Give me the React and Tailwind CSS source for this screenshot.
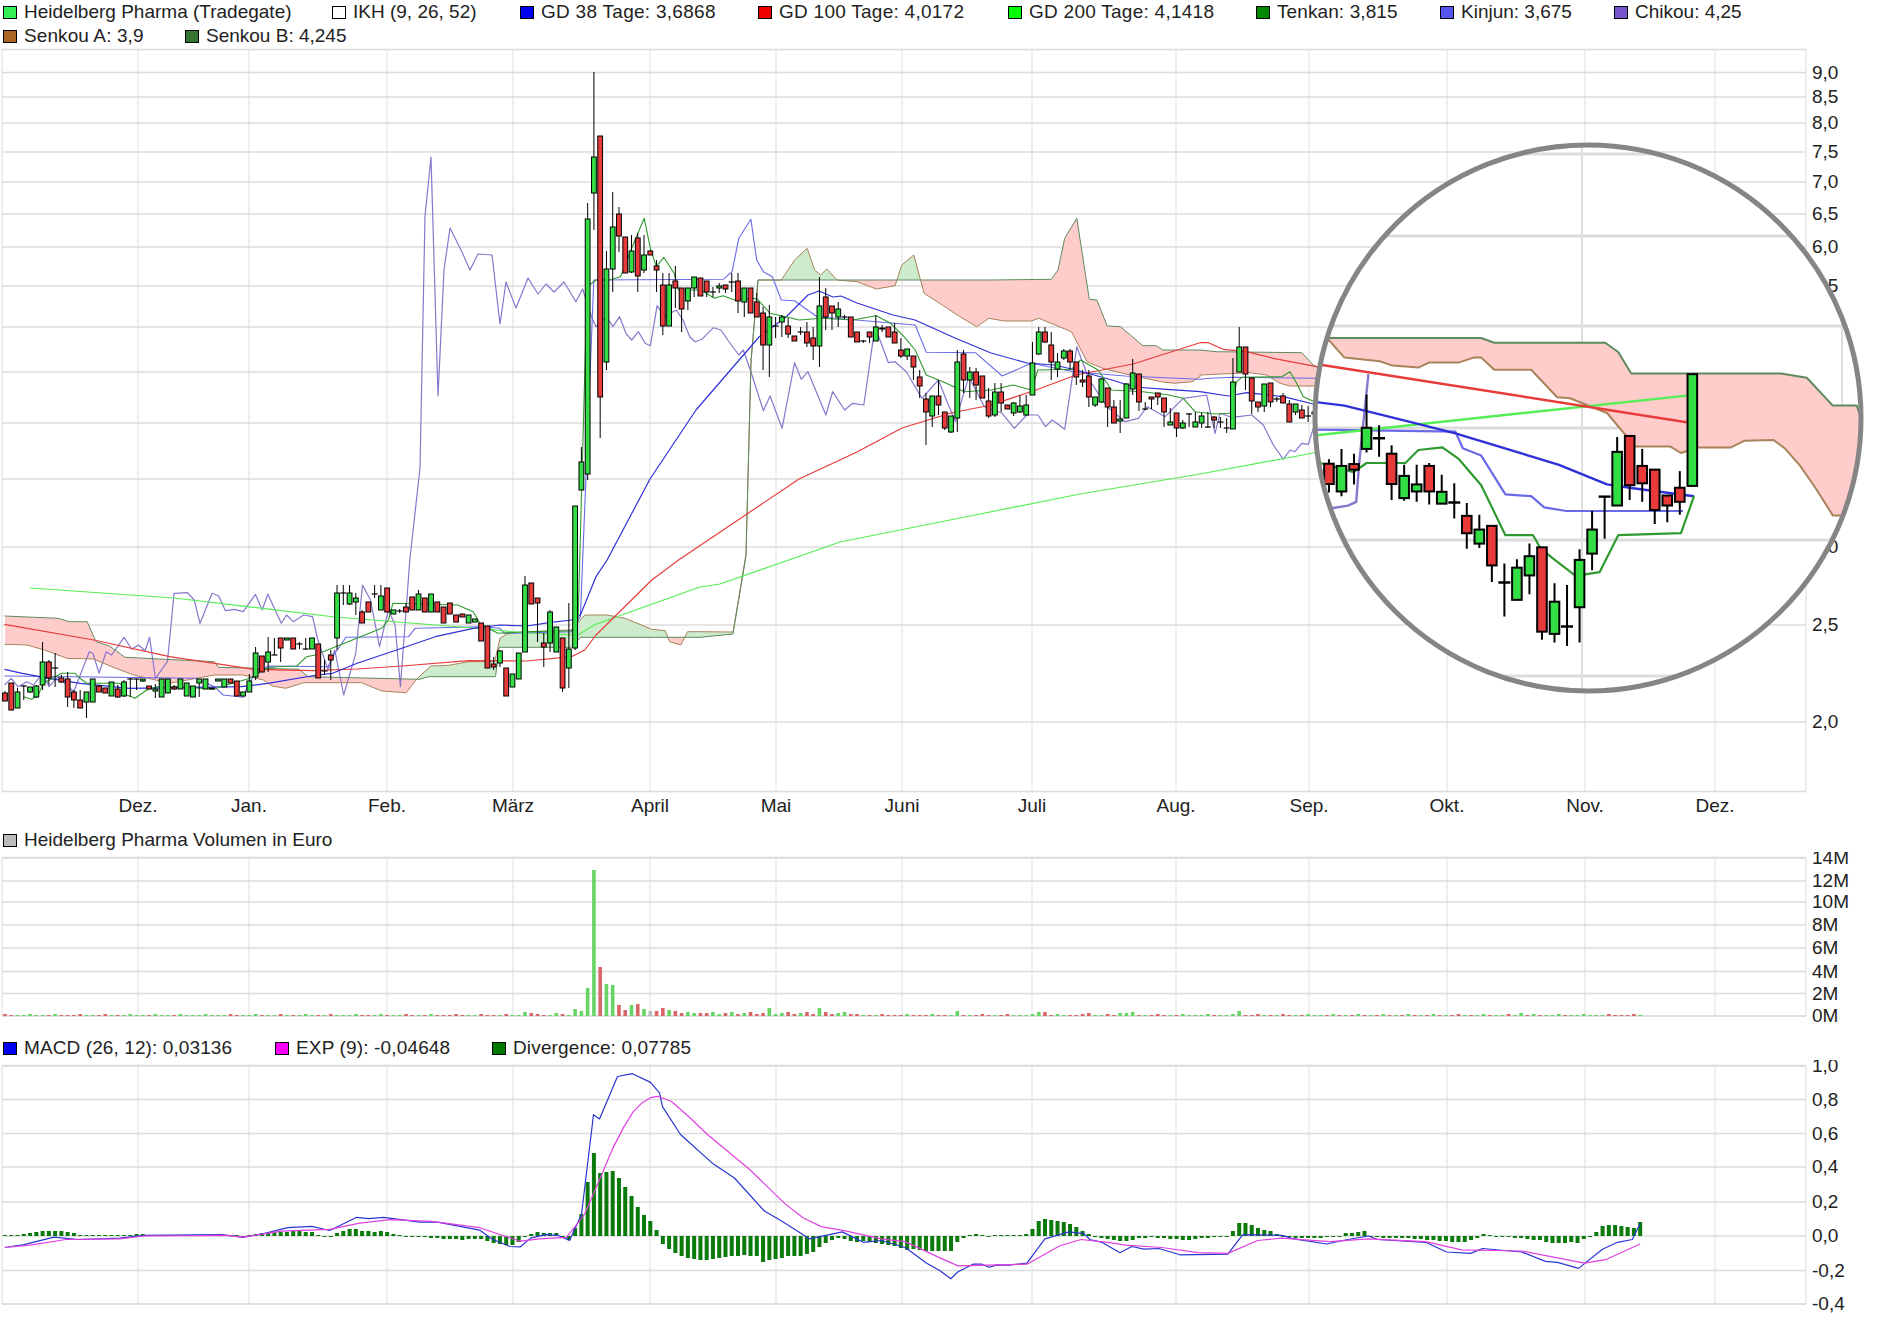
import React from "react";

// converters from measured crops to page pixels
const z3 = (l) => l.map(([x, y]) => [x / 2.24, 560 + y / 3]);
const z5 = (l) => l.map(([x, y]) => [500 + x / 2.24, 60 + y / 3]);
const z8 = (l) => l.map(([x, y]) => [1100 + x / 3, 300 + y / 3]);
const z12 = (l) => l.map(([x, y]) => [x / 3, 600 + y / 3]);
const lens = (l) => l.map(([x, y]) => [1444 + x / 5.406, 274 + y / 5.406]);
const z6 = (l) => l.map(([x, y]) => [x / 1.668, 780 + y / 2.877]);
const z7 = (l) => l.map(([x, y]) => [940 + x / 1.668, 780 + y / 2.877]);

const months = [
  ["Dez.", 138], ["Jan.", 249], ["Feb.", 387], ["März", 513], ["April", 650], ["Mai", 776], ["Juni", 902],
  ["Juli", 1032], ["Aug.", 1176], ["Sep.", 1309], ["Okt.", 1447], ["Nov.", 1585], ["Dez.", 1715],
];
const priceTicks = [
  ["9,0", 72.5], ["8,5", 97], ["8,0", 123], ["7,5", 152], ["7,0", 182], ["6,5", 214], ["6,0", 247],
  ["5,5", 286], ["5,0", 327], ["4,5", 372], ["4,0", 423], ["3,5", 479], ["3,0", 547], ["2,5", 625], ["2,0", 722],
];
const volumeTicks = [["14M", 858], ["12M", 881], ["10M", 902], ["8M", 925], ["6M", 948], ["4M", 971.5], ["2M", 993.5], ["0M", 1016]];
const macdTicks = [["1,0", 1066], ["0,8", 1099.5], ["0,6", 1133.5], ["0,4", 1167], ["0,2", 1202], ["0,0", 1236], ["-0,2", 1270.5], ["-0,4", 1304]];

// [green?, body top, body bottom, wick high, wick low], i = 0..209
const candles = [
  [0,693,701,691,701],[0,683,710,683,710],[1,692,708,688,708],[1,686,686,685,700],[1,687,692,687,693],[1,686,697,685,698],
  [1,662,685,642,690],[0,662,678,660,685],[1,668,668,653,687],[0,678,682,675,683],[0,679,697,672,707],[0,692,700,690,708],
  [0,700,708,690,708],[1,692,702,692,718],[1,679,702,679,702],[0,686,692,685,692],[0,688,693,688,693],[1,682,696,682,696],
  [0,689,697,685,698],[1,682,696,680,697],[1,679,679,678,697],[1,679,679,679,690],[1,679,681,679,682],[0,686,689,686,689],
  [1,689,691,684,698],[1,679,697,679,697],[1,679,693,679,693],[0,687,689,685,690],[1,679,689,679,689],[1,683,696,683,696],
  [1,686,697,686,697],[1,679,683,679,697],[1,679,689,679,689],[1,688,689,688,689],[1,679,681,679,681],[1,679,687,679,687],
  [0,679,683,679,683],[0,681,696,681,696],[1,692,696,692,696],[1,681,692,674,692],[1,653,677,647,680],[0,656,672,656,672],
  [1,652,662,637,672],[1,655,655,638,655],[0,638,648,638,662],[1,638,640,638,640],[0,638,649,638,649],[1,644,644,642,649],
  [1,649,649,638,650],[1,638,649,638,649],[0,644,678,644,678],[1,671,671,660,675],[0,655,660,650,680],[1,593,638,585,650],
  [1,593,593,585,605],[1,593,604,585,605],[1,598,602,593,615],[0,612,623,610,623],[0,602,612,602,612],[1,594,594,585,598],
  [1,596,610,585,610],[0,588,612,588,612],[1,610,614,610,614],[1,611,611,609,613],[0,607,612,603,612],[0,597,610,597,610],
  [1,594,610,590,610],[0,598,612,598,612],[1,594,612,594,612],[0,602,612,602,612],[0,607,623,607,623],[0,603,614,603,614],
  [0,615,622,615,622],[0,614,617,614,617],[1,615,623,615,623],[1,619,622,619,622],[0,623,641,623,641],[0,626,668,626,668],
  [0,664,667,657,670],[1,651,663,650,667],[0,668,696,668,696],[1,674,687,674,687],[1,653,679,653,679],[1,585,652,576,652],
  [0,583,604,583,604],[0,598,603,598,642],[0,643,647,633,667],[1,612,643,610,652],[1,627,652,627,652],[0,638,688,638,692],
  [1,649,668,603,688],[1,506,648,506,650],[1,462,490,447,490],[1,219,474,203,480],[1,157,193,72,230],[0,136,397,136,438],
  [1,269,362,251,370],[1,227,269,192,292],[0,214,236,207,252],[0,237,273,237,273],[1,251,272,235,273],[0,238,276,233,292],
  [1,255,270,235,273],[0,251,255,250,255],[0,266,270,260,292],[0,285,326,273,335],[1,285,326,273,326],[0,281,288,266,308],
  [0,288,309,288,332],[1,288,301,288,310],[1,277,288,277,297],[0,278,296,278,296],[0,281,292,281,297],[1,292,292,287,297],
  [1,286,288,283,293],[0,285,289,285,293],[1,282,282,273,292],[0,281,301,273,313],[1,288,302,288,317],[0,288,313,288,313],
  [0,302,317,293,317],[0,313,345,307,370],[1,317,345,305,377],[1,326,326,317,338],[1,317,322,315,337],[0,326,334,318,338],
  [0,336,341,336,341],[1,332,332,327,335],[0,332,343,322,347],[0,338,346,327,360],[1,306,346,277,367],[0,297,317,288,330],
  [0,306,313,306,330],[1,309,317,302,327],[1,317,317,315,319],[0,317,337,317,337],[0,332,342,332,342],[1,341,341,340,343],
  [0,332,337,332,343],[1,327,341,315,341],[0,328,329,325,332],[0,327,337,327,337],[0,332,343,323,343],[0,350,356,338,358],
  [1,349,356,349,360],[0,356,367,356,380],[0,377,386,370,398],[0,399,412,393,445],[1,396,416,396,427],[0,396,405,380,415],
  [0,412,428,412,430],[1,416,432,416,433],[1,362,418,350,432],[0,354,380,350,393],[1,372,380,367,398],[0,372,385,368,400],
  [0,376,398,376,398],[0,401,416,388,418],[1,392,415,383,417],[0,392,403,383,412],[0,405,409,405,409],[1,403,413,402,416],
  [1,406,412,395,413],[1,405,415,395,416],[1,363,395,342,395],[1,332,354,327,355],[0,332,342,327,343],[0,345,362,332,380],
  [1,362,369,353,377],[1,351,358,349,360],[0,351,362,349,370],[0,362,377,362,385],[0,380,382,370,387],[0,376,397,370,407],
  [1,397,405,397,407],[1,379,402,378,403],[0,388,407,388,427],[0,407,423,400,423],[1,419,421,400,433],[1,384,418,383,418],
  [1,373,389,359,395],[0,374,402,374,411],[1,409,409,402,410],[0,397,399,397,409],[0,393,397,393,405],[0,398,412,398,427],
  [1,422,425,408,425],[0,413,428,413,437],[1,423,428,420,429],[1,414,414,413,427],[1,422,427,412,427],[1,416,423,413,428],
  [1,427,427,412,428],[0,417,420,416,428],[1,422,422,417,428],[1,428,428,418,433],[1,382,429,358,429],[1,347,372,327,372],
  [0,347,374,347,390],[0,378,401,378,414],[0,402,407,402,412],[1,384,406,384,412],[0,383,402,383,407],[1,399,399,397,402],
  [0,396,403,393,403],[0,404,422,400,422],[1,404,412,404,415],[0,410,418,405,418],[1,416,416,406,422],[1,412,414,408,420],
];
// the lens only shows these, i = 232..261, read off the magnified crop
const lensCandles = [
  [0,902,957,890,980],[1,908,977,862,990],[0,903,918,875,958],[1,805,862,715,872],[1,833,833,798,883],[0,875,957,852,1000],
  [1,935,995,905,1002],[1,958,977,905,1005],[0,908,977,900,1012],[1,978,1010,932,1010],[1,1007,1007,955,1050],[0,1043,1090,1008,1132],
  [1,1080,1118,1040,1130],[0,1070,1177,1070,1222],[1,1223,1223,1172,1315],[1,1183,1270,1160,1270],[1,1152,1204,1118,1255],[0,1128,1356,1128,1378],
  [1,1275,1362,1225,1385],[1,1342,1342,1230,1395],[1,1162,1290,1133,1385],[1,1080,1145,1030,1190],[1,991,991,991,1105],[1,870,1015,830,1015],
  [0,827,960,827,1000],[0,908,955,862,1005],[0,918,1027,918,1065],[0,988,1015,988,1060],[0,967,1005,922,1040],[1,660,962,660,962],
].map((c) => [c[0], ...c.slice(1).map((v) => 274 + v / 5.406)]);

const candleX = (i) => 5 + 6.265 * i;
const allCandles = [
  ...candles.map((c, i) => ({ i, c })),
  ...lensCandles.map((c, i) => ({ i: i + 232, c })),
];

const senkouA = [
  ...z3([[10,253],[60,255],[100,270],[150,295],[210,297],[250,320],[300,345],[380,370],[480,345],[545,345],[590,360],[610,378],[640,385],[680,368],[810,368],[855,393],[910,398],[935,355],[965,318],[1005,316],[1050,305],[1108,305],[1120,235],[1135,222],[1180,215],[1280,210],[1310,165],[1360,165],[1400,175],[1460,208],[1490,212],[1500,245],[1525,255],[1540,215],[1568,215]]),
  [733, 632], [746, 554], [751, 360],
  ...z5([[578,660],[630,660],[660,600],[688,565],[705,630],[718,645],[732,627],[755,660],[800,665],[843,687],[885,677],[900,615],[927,585],[950,700],[985,730],[1030,770],[1068,800],[1095,775],[1130,783],[1190,783],[1207,775],[1280,815],[1315,905],[1350,925],[1395,940],[1480,965],[1510,970],[1550,965],[1568,950]]),
  ...z8([[300,225],[450,218],[500,225],[540,250],[570,258],[650,258]]),
  ...lens([[80,570],[120,615],[215,625],[250,637],[320,642],[350,628],[430,628],[470,615],[490,615],[525,648],[625,648],[695,722],[730,725],[830,765],[880,825],[885,855],[1000,855],[1030,873],[1075,858],[1165,858],[1200,840],[1280,838],[1310,860],[1350,905],[1395,970],[1440,1042],[1470,1042],[1520,960]]),
];
const senkouB = [
  ...z3([[10,168],[130,175],[155,185],[195,185],[215,245],[245,258],[280,292],[480,305],[490,322],[670,328],[690,350],[940,358],[960,350],[1110,350],[1118,262],[1280,262],[1300,232],[1568,232]]),
  [733, 634], [746, 556], [751, 362],
  ...z5([[578,660],[1100,660],[1235,658],[1250,630],[1265,535],[1292,475],[1320,718],[1337,720],[1360,798],[1390,800],[1440,857],[1470,857],[1485,870],[1568,870]]),
  ...z8([[350,155],[605,158],[640,195],[660,205]]),
  ...lens([[80,562],[490,562],[525,575],[825,575],[860,600],[895,658],[1300,658],[1370,670],[1440,745],[1505,745],[1520,790]]),
];

const gd200 = [[30,588],[174,598],[335,617],[473,628],[527,633],[578,635],[594,625],[616,617],[700,587],[720,584],[840,542],[960,518],[1080,494],[1200,474],[1308,454],...lens([[45,825],[1045,718]])];
const gd100 = [
  ...z3([[10,193],[210,240],[380,290],[570,328],[700,332],[800,327],[900,318],[1050,302],[1180,303],[1280,290],[1310,270],[1335,225],[1460,60],[1520,0]]),
  [799,479],[857,452],[902,428],[951,413],[991,405],[1036,390],[1076,375],[1133,364],
  ...z8([[300,128],[325,128],[370,148],[440,155],[520,175],[650,200]]),
  ...lens([[60,635],[1045,790]]),
];
const gd38 = [
  ...z3([[10,328],[50,340],[110,355],[180,370],[290,385],[540,380],[600,370],[710,345],[745,340],[800,310],[900,265],[975,230],[1060,205],[1120,195],[1180,198],[1230,188],[1280,180],[1300,165],[1335,50],[1360,0]]),
  [650,479],[696,410],[759,337],[786,317],[808,295],[819,291],[833,297],[841,296],[857,303],[893,315],[915,320],[955,338],[991,353],[1027,363],[1054,365],[1076,370],[1112,380],[1134,387],
  ...z8([[200,268],[300,275],[385,288],[440,278],[550,290],[640,312]]),
  ...lens([[40,735],[120,745],[300,790],[420,820],[700,905],[830,958],[900,968],[1065,990]]),
];
const tenkan = [
  ...z12([[70,290],[95,298],[115,285],[130,250],[185,220],[225,220],[240,235],[260,250],[360,250],[380,285],[405,295],[440,270],[470,260],[530,260],[600,265],[640,268],[680,255],[750,235],[800,205],[830,200],[890,198],[920,170],[945,165]]),
  ...z3([[855,205],[870,180],[880,130],[1025,135],[1060,155],[1075,190],[1115,220],[1180,215],[1280,212],[1295,180]]),
  ...z5([[195,680],[215,660],[245,660],[270,650],[295,565],[323,475],[337,565],[350,620],[367,592],[390,640],[400,690],[450,690],[480,715],[500,707],[525,720],[575,715],[605,760],[640,770],[670,780],[720,775],[790,780],[843,767],[875,790],[905,830],[930,870],[955,945],[1000,970],[1040,995],[1100,990],[1150,975],[1190,990],[1205,930],[1280,928],[1300,900],[1340,930],[1370,990],[1440,995],[1500,1005]]),
  ...z8([[205,285],[250,295],[285,335],[345,342],[390,340],[410,245],[425,232],[545,230],[570,215],[590,250],[610,290],[650,308]]),
  ...lens([[145,925],[180,900],[285,900],[320,865],[385,858],[430,890],[490,960],[555,1095],[630,1095],[650,1130],[680,1155],[745,1205],[810,1195],[860,1095],[1030,1090],[1065,990]]),
];
const kinjun = [
  ...z3([[10,348],[160,350],[440,355],[480,380],[500,405],[545,412],[555,375],[570,345],[600,318],[735,320],[745,290],[775,232],[915,230],[930,205],[1080,200],[1120,205],[1130,220],[1280,215],[1300,170]]),
  ...z5([[210,660],[500,658],[520,635],[535,535],[562,478],[575,600],[590,635],[610,650],[630,720],[660,722],[710,770],[930,795],[955,877],[1065,878],[1125,948],[1190,910],[1285,935],[1400,948],[1568,958]]),
  ...z8([[330,235],[400,232],[650,235]]),
  ...lens([[45,810],[420,815],[440,860],[490,880],[555,985],[625,990],[660,1020],[720,1030],[1035,1030]]),
];
const chikou = [
  ...z3([[10,375],[25,355],[40,380],[60,365],[75,375],[95,340],[110,380],[130,350],[165,395],[200,275],[208,280],[222,340],[238,275],[250,285],[278,232],[295,268],[310,255],[325,272],[335,232],[348,355],[375,305],[390,100],[420,98],[435,120],[448,190],[475,100],[490,108],[505,152],[525,148],[545,155],[572,103],[587,150],[600,103],[630,190],[642,165],[657,185],[680,165],[700,170],[712,240],[735,330],[750,270],[770,405],[797,280],[812,75],[830,120],[850,260],[870,150],[885,195],[897,380],[918,0]]),
  [420,468],[425,216],[431,157],[438,396],[444,270],[450,228],[462,252],[470,270],[478,254],[492,255],[500,324],[506,282],[516,308],[528,278],[538,294],[546,284],[554,292],[564,282],
  ...z5([[170,725],[185,687],[205,770],[215,800],[238,770],[253,800],[268,770],[282,820],[295,840],[310,815],[325,850],[337,857],[352,737],[368,770],[395,750],[410,780],[425,830],[437,845],[452,838],[478,803],[495,810],[510,840],[535,885],[545,870],[562,935],[590,1052],[605,1008],[632,1105],[660,908],[675,958],[690,935],[730,1065],[745,995],[772,1050],[790,1030],[815,1035],[840,800],[870,908],[885,905],[910,935],[945,1015],[982,960],[1000,1020],[1020,1085],[1050,950],[1085,1040],[1125,1060],[1152,1105],[1180,1065],[1205,1065],[1222,1100],[1237,1080],[1265,1108],[1292,860],[1320,960],[1360,1040],[1400,1085],[1430,1075],[1450,1040],[1490,1070],[1530,1015]]),
  ...z8([[320,285],[345,400],[360,340],[390,350],[415,350],[455,345],[490,375],[520,435],[550,478],[570,450],[585,455],[605,430],[625,433],[645,370]]),
  ...lens([[90,1022],[130,1015],[152,1005],[160,900],[185,660]]),
];

const macdLine = [
  ...z6([[8,1345],[40,1337],[90,1315],[130,1322],[200,1318],[240,1310],[370,1308],[405,1316],[440,1305],[480,1288],[520,1284],[550,1296],[595,1258],[615,1262],[640,1258],[700,1272],[730,1272],[800,1295],[820,1320],[850,1342],[868,1343],[885,1318],[910,1308],[930,1310],[950,1325],[970,1250],[990,963],[1000,975],[1030,853],[1055,845],[1085,870],[1100,900],[1105,940],[1135,1020],[1190,1105],[1225,1145],[1275,1240],[1305,1270],[1350,1320],[1405,1300],[1440,1330],[1470,1325],[1510,1345],[1545,1390]]),
  ...z7([[0,1412],[18,1435],[30,1415],[55,1393],[70,1393],[82,1402],[95,1395],[115,1396],[145,1390],[175,1320],[215,1300],[240,1305],[250,1322],[270,1330],[300,1360],[320,1342],[340,1350],[365,1348],[400,1366],[480,1364],[505,1308],[570,1310],[590,1320],[645,1335],[680,1322],[715,1312],[730,1322],[810,1330],[845,1358],[885,1362],[905,1348],[970,1358],[1010,1385],[1030,1388],[1065,1405],[1105,1350],[1130,1330],[1155,1322],[1168,1275]]),
];
const expLine = [
  ...z6([[8,1345],[50,1338],[110,1322],[200,1320],[240,1312],[380,1310],[405,1315],[470,1298],[550,1293],[600,1275],[650,1265],[720,1270],[800,1288],[868,1327],[900,1320],[945,1316],[975,1250],[1005,1130],[1022,1060],[1040,1000],[1056,955],[1070,930],[1085,914],[1097,910],[1120,925],[1150,970],[1180,1020],[1250,1120],[1310,1220],[1340,1260],[1370,1285],[1410,1297],[1470,1320],[1510,1328]]),
  ...z7([[0,1375],[30,1398],[145,1393],[200,1340],[235,1322],[280,1330],[310,1338],[370,1345],[430,1360],[480,1362],[530,1325],[570,1318],[650,1328],[715,1320],[810,1328],[870,1352],[970,1355],[1075,1390],[1110,1380],[1168,1335]]),
];

const divergence = [
  1,1,1,2,3,4,5,5,5,5,4,3,1,1,1,1,1,1,1,1,1,2,2,1,1,1,1,1,1,1,1,1,1,1,1,1,1,1,-1,1,2,3,3,4,4,4,5,5,4,4,
  1,-1,-1,3,5,7,7,5,5,4,5,4,2,1,-1,-1,-1,-1,-2,-2,-3,-3,-3,-4,-3,-3,-3,-5,-7,-8,-9,-9,-6,-1,2,4,3,3,3,-2,
  -4,8,22,54,83,63,64,65,58,49,40,29,21,15,6,-8,-13,-17,-20,-22,-23,-24,-24,-23,-22,-21,-20,-20,-19,-20,-20,-26,-24,-23,-22,-20,-20,-20,-18,-16,
  -11,-7,-4,-2,-3,-5,-6,-5,-6,-7,-8,-9,-10,-12,-14,-13,-14,-15,-15,-15,-15,-15,-6,-2,1,2,1,-1,1,1,1,1,1,2,7,15,17,16,15,14,12,9,5,2,
  -1,-2,-3,-4,-5,-5,-4,-2,-2,-1,-2,-2,-3,-3,-4,-4,-3,-2,-2,-1,-1,-1,5,13,13,11,8,6,5,2,-1,-1,-2,-2,-2,-2,-2,-1,-1,-1,
  3,3,4,5,-1,-1,-2,-2,-2,-2,-2,-3,-3,-4,-4,-5,-5,-6,-6,-6,-4,-2,2,1,-1,-1,-1,-2,-2,-3,-4,-4,-6,-7,-7,-7,-6,-7,-3,-1,4,10,11,11,10,9,8,14,
];

const bigVolumes = {
  83: 4, 84: 3, 85: 2, 88: 3, 89: 2, 91: 7, 92: 5, 93: 28, 94: 146, 95: 49, 96: 32, 97: 31, 98: 11, 99: 6, 100: 11, 101: 12, 102: 7, 103: 5, 104: 5,
  105: 8, 106: 6, 107: 5, 108: 3, 109: 4, 110: 3, 111: 3, 122: 8, 130: 8, 152: 5, 165: 4, 166: 4, 173: 3, 178: 3, 179: 3, 180: 4, 197: 5, 242: 3,
};
const greenById = {};
allCandles.forEach(({ i, c }) => { greenById[i] = c[0] === 1; });
const volumes = Array.from({ length: 262 }, (_, i) => {
  const base = i > 104 && i < 136 ? 2 + ((i * 7) % 3) : 1 + (i % 4 === 0 ? 1 : 0);
  const isGreen = greenById[i] !== undefined ? greenById[i] : i % 2 === 0;
  return { h: bigVolumes[i] || base, color: i === 103 ? "#bbbbbb" : isGreen ? "#66d566" : "#d96666" };
});

const at = (pts, x) => {
  for (let k = 1; k < pts.length; k++) {
    if (x <= pts[k][0]) {
      const [x0, y0] = pts[k - 1];
      const [x1, y1] = pts[k];
      return x1 === x0 ? y1 : y0 + ((y1 - y0) * (x - x0)) / (x1 - x0);
    }
  }
  return pts[pts.length - 1][1];
};

// split the cloud where the two senkou lines cross
const buildCloud = () => {
  const parts = [];
  let cur = null;
  for (let x = 5; x <= 1725; x++) {
    const a = at(senkouA, x);
    const b = at(senkouB, x);
    const up = a < b;
    if (!cur || cur.up !== up) {
      if (cur) parts.push(cur);
      cur = { up, top: [], bottom: [] };
    }
    cur.top.push([x, a]);
    cur.bottom.unshift([x, b]);
  }
  parts.push(cur);
  return parts;
};

const toPoints = (pts) => pts.map((p) => `${p[0].toFixed(1)},${p[1].toFixed(1)}`).join(" ");

const Line = ({ pts, color, width = 1 }) => (
  <polyline points={toPoints(pts)} fill="none" stroke={color} strokeWidth={width} strokeLinejoin="round" />
);

const Candle = ({ i, c }) => {
  const [green, top, bottom, hi, lo] = c;
  const x = candleX(i);
  return (
    <g>
      <line x1={x} x2={x} y1={hi} y2={lo} stroke="#000" strokeWidth="1" />
      {top === bottom ? (
        <line x1={x - 3} x2={x + 3} y1={top} y2={top} stroke="#000" strokeWidth="1.2" />
      ) : (
        <rect x={x - 2.4} y={top} width="4.8" height={bottom - top} fill={green ? "#33dd44" : "#e83a3a"} stroke="#000" strokeWidth="1" />
      )}
    </g>
  );
};

const Grid = ({ top, bottom, ticks }) => (
  <g>
    {months.map(([label, x], i) => (
      <line key={i} x1={x} x2={x} y1={top} y2={bottom} stroke="#dfdfdf" strokeWidth="1" />
    ))}
    {ticks.map(([label, y]) => (
      <line key={label} x1="2" x2="1806" y1={y} y2={y} stroke="#dcdcdc" strokeWidth="1.4" />
    ))}
    <line x1="2" x2="2" y1={top} y2={bottom} stroke="#dcdcdc" strokeWidth="1" />
    <line x1="1806" x2="1806" y1={top} y2={bottom} stroke="#dcdcdc" strokeWidth="1" />
    <line x1="2" x2="1806" y1={top} y2={top} stroke="#dcdcdc" strokeWidth="1.4" />
    <line x1="2" x2="1806" y1={bottom} y2={bottom} stroke="#dcdcdc" strokeWidth="1.4" />
  </g>
);

const AxisLabels = ({ ticks }) =>
  ticks.map(([label, y]) => (
    <text key={label} x="1812" y={y + 6} className="fill-[#222] text-[19px]">
      {label}
    </text>
  ));

const LegendItem = ({ color, label, className }) => (
  <div className={`flex items-center gap-[7px] h-6 whitespace-nowrap ${className}`}>
    <span className="w-[14px] h-[13px] shrink-0 border border-black" style={{ backgroundColor: color }} />
    <span>{label}</span>
  </div>
);

const cx = 1588;
const cy = 418;

const PriceChart = () => (
  <svg width="1880" height="780" viewBox="0 48 1880 780" className="block">
    <defs>
      <clipPath id="lens-clip">
        <circle cx={cx} cy={cy} r="272" />
      </clipPath>
      <g id="plot">
        <Grid top={49.5} bottom={791.5} ticks={priceTicks} />
        {buildCloud().map((part, i) => (
          <polygon key={i} points={toPoints([...part.top, ...part.bottom])} fill={part.up ? "#cdeccd" : "#ffcccc"} />
        ))}
        <Line pts={chikou} color="#8877cc" width={1.2} />
        <Line pts={senkouA} color="#a9825a" />
        <Line pts={senkouB} color="#5f8a5f" />
        <Line pts={kinjun} color="#6a6ae8" width={1.1} />
        <Line pts={gd200} color="#55ee55" width={1.2} />
        <Line pts={gd100} color="#e83c3c" width={1.2} />
        <Line pts={gd38} color="#3030d8" width={1.2} />
        <Line pts={tenkan} color="#2f9a2f" width={1.1} />
        {allCandles.map(({ i, c }) => (
          <Candle key={i} i={i} c={c} />
        ))}
      </g>
    </defs>
    <use href="#plot" />
    {months.map(([label, x], i) => (
      <text key={i} x={x} y="812" textAnchor="middle" className="fill-[#222] text-[19px]">
        {label}
      </text>
    ))}
    <AxisLabels ticks={priceTicks} />
    <circle cx={cx} cy={cy} r="272" fill="#fff" />
    <g clipPath="url(#lens-clip)">
      <use href="#plot" transform={`translate(${cx} ${cy}) scale(2) translate(${-cx} ${-cy})`} />
    </g>
    <circle cx={cx} cy={cy} r="273" fill="none" stroke="#858585" strokeWidth="5" />
  </svg>
);

const VolumeChart = () => (
  <svg width="1880" height="184" viewBox="0 852 1880 184" className="block">
    <Grid top={857.5} bottom={1016} ticks={volumeTicks} />
    {volumes.map((v, i) => (
      <rect key={i} x={candleX(i) - 1.8} y={1016 - v.h} width="3.6" height={v.h} fill={v.color} />
    ))}
    <AxisLabels ticks={volumeTicks} />
  </svg>
);

const MacdChart = () => (
  <svg width="1880" height="265" viewBox="0 1060 1880 265" className="block">
    <Grid top={1065.5} bottom={1304} ticks={macdTicks} />
    {divergence.map((d, i) => (
      <rect key={i} x={candleX(i) - 2} y={d > 0 ? 1236 - d : 1236} width="4" height={Math.abs(d)} fill="#0a7a0a" />
    ))}
    <Line pts={macdLine} color="#2a35d0" width={1.2} />
    <Line pts={expLine} color="#e040e0" width={1.2} />
    <AxisLabels ticks={macdTicks} />
  </svg>
);

const priceLegend = [
  ["#33ee55", "Heidelberg Pharma (Tradegate)", "w-[329px]"],
  ["#ffffff", "IKH (9, 26, 52)", "w-[188px]"],
  ["#0000ee", "GD 38 Tage: 3,6868", "w-[238px] tracking-[0.28px]"],
  ["#ee0000", "GD 100 Tage: 4,0172", "w-[250px] tracking-[0.26px]"],
  ["#00ff00", "GD 200 Tage: 4,1418", "w-[248px] tracking-[0.26px]"],
  ["#008800", "Tenkan: 3,815", "w-[184px] tracking-[0.1px]"],
  ["#5555ee", "Kinjun: 3,675", "w-[174px]"],
  ["#7755cc", "Chikou: 4,25", "w-[200px]"],
  ["#aa6622", "Senkou A: 3,9", "w-[182px] tracking-[0.1px]"],
  ["#337733", "Senkou B: 4,245", "w-[200px]"],
];

const App = () => {
  return (
    <div className="w-[1880px] h-[1325px] overflow-hidden bg-white text-[#222] text-[19px] font-['Liberation_Sans',Arial,sans-serif]">
      <div className="flex flex-wrap content-start pl-[3px] h-12">
        {priceLegend.map(([color, label, cls]) => (
          <LegendItem key={label} color={color} label={label} className={cls} />
        ))}
      </div>
      <PriceChart />
      <div className="flex pl-[3px] h-6">
        <LegendItem color="#bbbbbb" label="Heidelberg Pharma Volumen in Euro" className="w-[400px]" />
      </div>
      <VolumeChart />
      <div className="flex pl-[3px] h-6">
        <LegendItem color="#0000ee" label="MACD (26, 12): 0,03136" className="w-[272px] tracking-[0.1px]" />
        <LegendItem color="#ff00ff" label="EXP (9): -0,04648" className="w-[217px] tracking-[0.15px]" />
        <LegendItem color="#007700" label="Divergence: 0,07785" className="w-[260px] tracking-[0.15px]" />
      </div>
      <MacdChart />
    </div>
  );
};

export default App;
